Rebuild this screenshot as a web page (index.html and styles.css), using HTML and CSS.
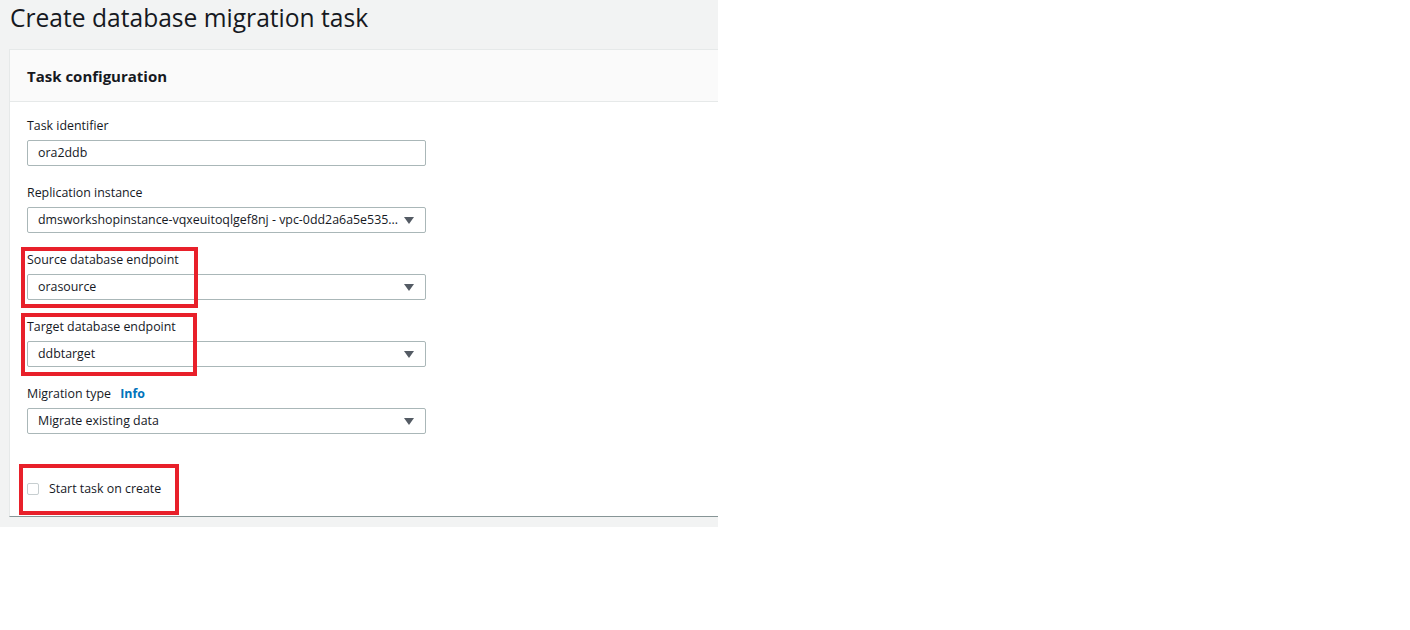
FILE: index.html
```html
<!DOCTYPE html>
<html>
<head>
<meta charset="utf-8">
<link rel="stylesheet" href="styles.css">
</head>
<body>
<div class="page">
  <h1 class="title">Create database migration task</h1>
  <div class="card">
    <div class="card-header">Task configuration</div>
    <div class="card-body">
      <div class="field field-first">
        <div class="label">Task identifier</div>
        <div class="input">ora2ddb</div>
      </div>
      <div class="field">
        <div class="label">Replication instance</div>
        <div class="input select"><span class="val">dmsworkshopinstance-vqxeuitoqlgef8nj - vpc-0dd2a6a5e535...</span><svg class="caret" width="10" height="7" viewBox="0 0 10 7"><path d="M0 0H10L5 7Z"/></svg></div>
      </div>
      <div class="field">
        <div class="label">Source database endpoint</div>
        <div class="input select"><span class="val">orasource</span><svg class="caret" width="10" height="7" viewBox="0 0 10 7"><path d="M0 0H10L5 7Z"/></svg></div>
        <div class="hl hl-source"></div>
      </div>
      <div class="field">
        <div class="label">Target database endpoint</div>
        <div class="input select"><span class="val">ddbtarget</span><svg class="caret" width="10" height="7" viewBox="0 0 10 7"><path d="M0 0H10L5 7Z"/></svg></div>
        <div class="hl hl-target"></div>
      </div>
      <div class="field">
        <div class="label">Migration type <span class="info">Info</span></div>
        <div class="input select"><span class="val">Migrate existing data</span><svg class="caret" width="10" height="7" viewBox="0 0 10 7"><path d="M0 0H10L5 7Z"/></svg></div>
      </div>
      <div class="check-row">
        <span class="checkbox"></span>
        <span class="check-label">Start task on create</span>
        <div class="hl hl-check"></div>
      </div>
    </div>
  </div>
</div>
</body>
</html>
```

FILE: styles.css
```css
html, body {
  margin: 0;
  padding: 0;
  background: #ffffff;
}
body {
  font-family: "Open Sans", "Noto Sans", sans-serif;
  color: #16191f;
}
.page {
  width: 718px;
  height: 527px;
  background: #f2f3f3;
  box-sizing: border-box;
  padding-top: 2px;
}
.title {
  margin: 0;
  padding-left: 10px;
  font-size: 24.6px;
  font-weight: 400;
  line-height: 32px;
  color: #16191f;
}
.card {
  margin-top: 15px;
  margin-left: 9px;
  background: #ffffff;
  border-top: 1px solid #e6e9e9;
  border-left: 1px solid #e6e9e9;
  border-bottom: 1px solid #879596;
}
.card-header {
  height: 52px;
  box-sizing: border-box;
  background: #fafafa;
  border-bottom: 1px solid #e6e9e9;
  padding-left: 17px;
  font-size: 15px;
  font-weight: 700;
  line-height: 52px;
}
.card-body {
  padding: 14px 0 0 17px;
  height: 414px;
  box-sizing: border-box;
}
.field {
  position: relative;
  width: 399px;
  margin-bottom: 17px;
}
.field-first {
  margin-bottom: 17px;
}
.label {
  font-size: 12.4px;
  line-height: 20px;
  margin-bottom: 4px;
}
.info {
  color: #0073bb;
  font-weight: 700;
  margin-left: 6px;
}
.input {
  height: 26px;
  box-sizing: border-box;
  border: 1px solid #aab7b8;
  border-radius: 2px;
  padding: 0 10px;
  font-size: 12.4px;
  line-height: 24px;
  display: flex;
  align-items: center;
  background: #ffffff;
}
.select .val {
  flex: 1;
  white-space: nowrap;
  overflow: hidden;
  text-overflow: ellipsis;
}
.caret {
  fill: #545b64;
  margin-left: 5px;
  margin-right: 1px;
  flex: none;
}
.check-row {
  position: relative;
  display: flex;
  align-items: center;
  gap: 10px;
  margin-top: 45px;
  font-size: 12.4px;
  line-height: 20px;
}
.checkbox {
  width: 12px;
  height: 12px;
  box-sizing: border-box;
  border: 1px solid #c7ced0;
  border-radius: 2px;
  background: #fff;
}
.hl {
  position: absolute;
  border: 4px solid #e8202a;
  box-sizing: border-box;
  pointer-events: none;
}
.hl-source {
  left: -6px;
  top: -3px;
  width: 177px;
  height: 61px;
}
.hl-target {
  left: -6px;
  top: -4px;
  width: 176px;
  height: 63px;
}
.hl-check {
  left: -8px;
  top: -15px;
  width: 160px;
  height: 51px;
}
```
